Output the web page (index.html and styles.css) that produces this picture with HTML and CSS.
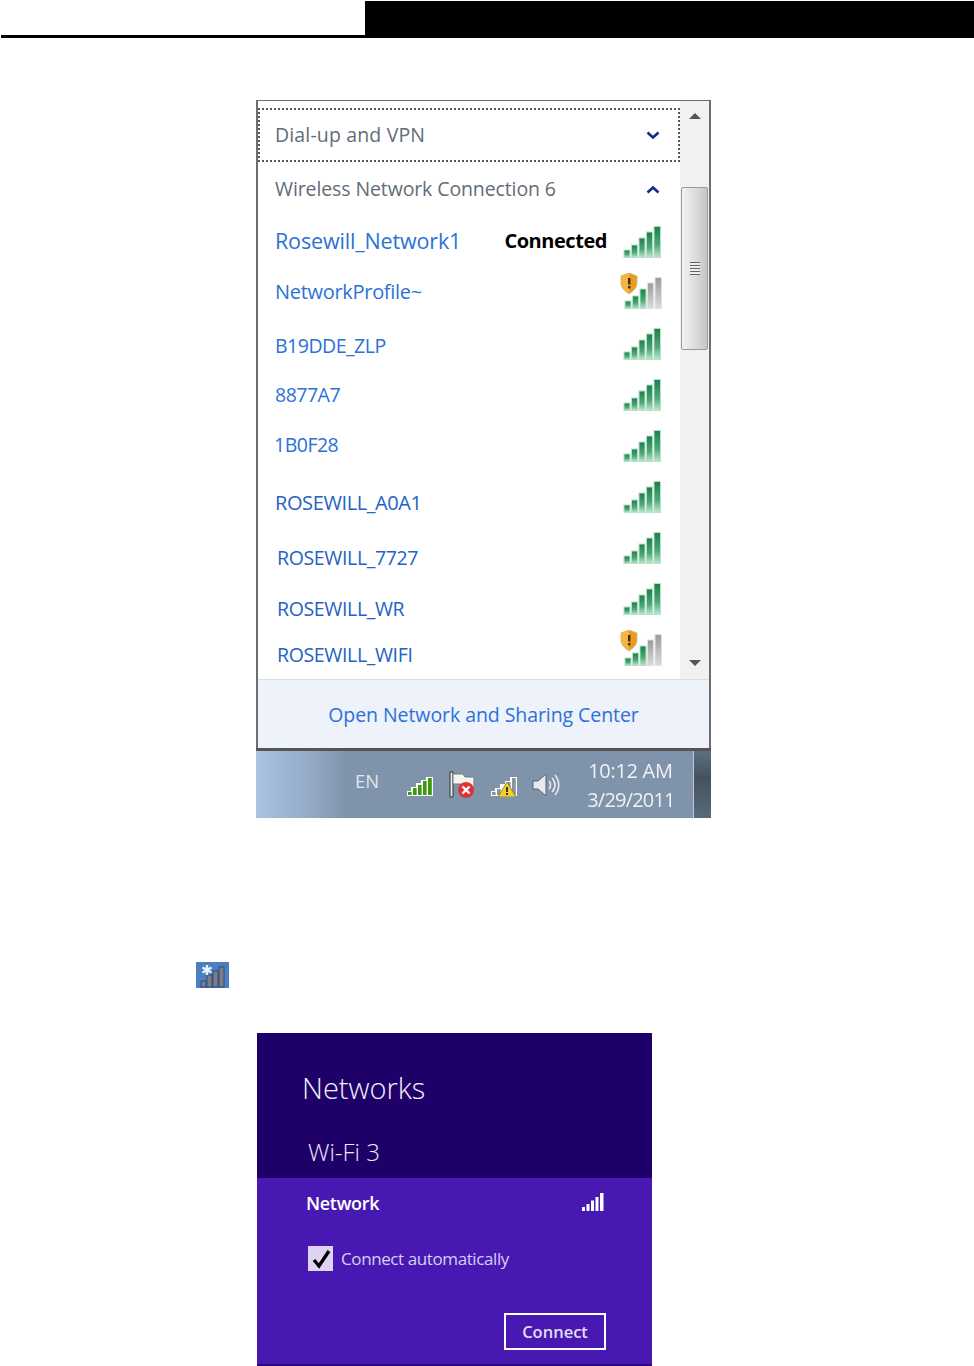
FILE: index.html
```html
<!DOCTYPE html>
<html lang="en">
<head>
    <meta charset="UTF-8">
    <meta name="viewport" content="width=device-width, initial-scale=1.0">
    <title>Connect to a wireless network</title>
    <link rel="stylesheet" href="styles.css">
</head>
<body>

    <svg class="defs" width="0" height="0">
        <defs>
            <linearGradient id="bar-green" x1="0" y1="0" x2="0" y2="1">
                <stop offset="0" stop-color="#1c7f4c"/>
                <stop offset="0.6" stop-color="#4fa978"/>
                <stop offset="1" stop-color="#bfe8cf"/>
            </linearGradient>
            <linearGradient id="bar-grey" x1="0" y1="0" x2="0" y2="1">
                <stop offset="0" stop-color="#9a9a9a"/>
                <stop offset="1" stop-color="#dcdcdc"/>
            </linearGradient>
            <symbol id="bars-full" viewBox="0 0 38 32">
                <g stroke="#b4e0c5" stroke-width="1">
                    <rect x="1" y="24" width="6" height="7.5" fill="url(#bar-green)"/>
                    <rect x="8.5" y="19" width="6" height="12.5" fill="url(#bar-green)"/>
                    <rect x="16" y="12" width="6" height="19.5" fill="url(#bar-green)"/>
                    <rect x="23.5" y="6" width="6" height="25.5" fill="url(#bar-green)"/>
                    <rect x="31" y="0.5" width="6.5" height="31" fill="url(#bar-green)"/>
                </g>
            </symbol>
            <symbol id="bars-secured" viewBox="0 0 42 36">
                <g stroke="#b4e0c5" stroke-width="1">
                    <rect x="5" y="28" width="6" height="7.5" fill="url(#bar-green)"/>
                    <rect x="12.5" y="23" width="6" height="12.5" fill="url(#bar-green)"/>
                    <rect x="20" y="16" width="6" height="19.5" fill="url(#bar-green)"/>
                </g>
                <g stroke="#e2e2e2" stroke-width="1">
                    <rect x="27.5" y="10" width="6" height="25.5" fill="url(#bar-grey)"/>
                    <rect x="35" y="4.5" width="6.5" height="31" fill="url(#bar-grey)"/>
                </g>
                <path d="M9 0 L17 3 V10 C17 15 13 18 9 21 C5 18 1 15 1 10 V3 Z" fill="#ea9a1e" stroke="#c9c088" stroke-width="1"/>
                <path d="M9 0 L9 21 C5 18 1 15 1 10 V3 Z" fill="#f4b544"/>
                <rect x="8" y="5" width="2.4" height="6.5" fill="#4a2a08"/>
                <rect x="8" y="13" width="2.4" height="2.4" fill="#4a2a08"/>
            </symbol>
        </defs>
    </svg>

    <header class="top-bar">
        <div class="top-left"></div>
        <div class="top-right"></div>
    </header>

    <section class="popup">
        <div class="popup-body">
            <div class="net-list">
                <div class="group-row focus">
                    <span class="group-name vpn">Dial-up and VPN</span>
                    <svg class="chevron" viewBox="0 0 14 9"><path d="M1.5 1.5 L7 6.5 L12.5 1.5" /></svg>
                </div>
                <div class="group-row">
                    <span class="group-name">Wireless Network Connection 6</span>
                    <svg class="chevron" viewBox="0 0 14 9"><path d="M1.5 7.5 L7 2.5 L12.5 7.5" /></svg>
                </div>

                <div class="net-row">
                    <span class="net-name big up-1">Rosewill_Network1</span>
                    <span class="net-status up-1">Connected</span>
                    <svg class="bars"><use href="#bars-full"/></svg>
                </div>
                <div class="net-row">
                    <span class="net-name up-1">NetworkProfile~</span>
                    <svg class="bars-secured"><use href="#bars-secured"/></svg>
                </div>
                <div class="net-row">
                    <span class="net-name tight up-1 drop-s">B19DDE_ZLP</span>
                    <svg class="bars"><use href="#bars-full"/></svg>
                </div>
                <div class="net-row">
                    <span class="net-name tight">8877A7</span>
                    <svg class="bars"><use href="#bars-full"/></svg>
                </div>
                <div class="net-row">
                    <span class="net-name tight up-1 out-1">1B0F28</span>
                    <svg class="bars"><use href="#bars-full"/></svg>
                </div>
                <div class="net-row">
                    <span class="net-name small wide drop-m">ROSEWILL_A0A1</span>
                    <svg class="bars"><use href="#bars-full"/></svg>
                </div>
                <div class="net-row">
                    <span class="net-name small in-2 drop-l">ROSEWILL_7727</span>
                    <svg class="bars"><use href="#bars-full"/></svg>
                </div>
                <div class="net-row">
                    <span class="net-name small in-2 drop-l">ROSEWILL_WR</span>
                    <svg class="bars"><use href="#bars-full"/></svg>
                </div>
                <div class="net-row">
                    <span class="net-name small in-2 drop-m2">ROSEWILL_WIFI</span>
                    <svg class="bars-secured"><use href="#bars-secured"/></svg>
                </div>
            </div>

            <div class="scrollbar">
                <svg class="arrow" viewBox="0 0 12 6"><path d="M6 0 L12 6 H0 Z"/></svg>
                <div class="track">
                    <div class="thumb">
                        <span class="grip"></span>
                    </div>
                </div>
                <svg class="arrow" viewBox="0 0 12 6"><path d="M0 0 H12 L6 6 Z"/></svg>
            </div>
        </div>

        <div class="popup-foot">Open Network and Sharing Center</div>

        <div class="taskbar">
            <span class="lang">EN</span>
            <div class="tray">
                <svg class="tray-icon" viewBox="0 0 28 22">
                    <path d="M1 21 V16 H5 V12 H10 V8 H15 V5 H20 V2 H27 V21 Z" fill="#fff"/>
                    <rect x="2" y="17" width="3.6" height="3" fill="#3d9a10"/>
                    <rect x="7" y="13" width="3.6" height="7" fill="#3d9a10"/>
                    <rect x="12" y="10" width="3.6" height="10" fill="#3d9a10"/>
                    <rect x="17" y="6" width="3.6" height="14" fill="#3d9a10"/>
                    <rect x="22" y="3" width="3.8" height="17" fill="#3d9a10"/>
                </svg>
                <svg class="tray-icon flag" viewBox="0 0 28 27">
                    <path d="M2 1 H5 V26 H2 Z" fill="#e8e8e8" stroke="#333" stroke-width="1"/>
                    <path d="M5 3 H15 L17 6 H26 V16 H15 L13 13 H5 Z" fill="#f4f4f4" stroke="#777" stroke-width="1"/>
                    <circle cx="18" cy="19" r="8" fill="#d9343a"/>
                    <path d="M14.5 15.5 L21.5 22.5 M21.5 15.5 L14.5 22.5" stroke="#fff" stroke-width="2.4"/>
                </svg>
                <svg class="tray-icon" viewBox="0 0 28 22">
                    <path d="M1 21 V16 H5 V13 H10 V9 H15 V6 H20 V2 H27 V21 Z" fill="#fff"/>
                    <rect x="2" y="17" width="3.6" height="3" fill="#8a94a0"/>
                    <rect x="7" y="14" width="3.6" height="6" fill="#8a94a0"/>
                    <rect x="17" y="7" width="3.6" height="13" fill="#8a94a0"/>
                    <rect x="22" y="3" width="3.8" height="17" fill="#8a94a0"/>
                    <path d="M17 7 L26 22 H8 Z" fill="#f5cf2e" stroke="#8a7410" stroke-width="0.8"/>
                    <rect x="16" y="12" width="2" height="5" fill="#333"/>
                    <rect x="16" y="18" width="2" height="2" fill="#333"/>
                </svg>
                <svg class="tray-icon speaker" viewBox="0 0 28 26">
                    <path d="M1 9 H6 L14 2 V24 L6 17 H1 Z" fill="#e6e9ee" stroke="#5a6470" stroke-width="1"/>
                    <path d="M17 9 C19 11 19 15 17 17 M20 6 C24 10 24 16 20 20 M23 3 C28 9 28 17 23 23" fill="none" stroke="#e6e9ee" stroke-width="1.6"/>
                </svg>
            </div>
            <div class="clock">
                <span>10:12 AM</span>
                <span class="date">3/29/2011</span>
            </div>
            <div class="show-desktop"></div>
        </div>
    </section>

    <div class="legend-icon">
        <svg viewBox="0 0 33 26" width="33" height="26">
            <rect x="5" y="19" width="5" height="6" fill="#7c7e84" stroke="#2c4c7c"/>
            <rect x="11" y="13" width="5" height="12" fill="#7c7e84" stroke="#2c4c7c"/>
            <rect x="17" y="9" width="5" height="16" fill="#7c7e84" stroke="#2c4c7c"/>
            <rect x="23" y="5" width="5" height="20" fill="#7c7e84" stroke="#2c4c7c"/>
            <path d="M11 3 V13 M6.5 5.5 L15.5 10.5 M15.5 5.5 L6.5 10.5" stroke="#eef2f8" stroke-width="2.4"/>
        </svg>
    </div>

    <section class="charm">
        <div class="charm-head">
            <div class="charm-title">Networks</div>
            <div class="charm-sub">Wi-Fi 3</div>
        </div>
        <div class="charm-body">
            <div class="charm-net">
                <span>Network</span>
                <svg class="charm-bars" viewBox="0 0 22 18">
                    <rect x="0" y="14" width="3" height="4"/>
                    <rect x="4.5" y="11" width="3" height="7"/>
                    <rect x="9" y="7.5" width="3" height="10.5"/>
                    <rect x="13.5" y="4" width="3" height="14"/>
                    <rect x="18" y="0" width="3.5" height="18"/>
                </svg>
            </div>
            <div class="charm-check">
                <span class="checkbox">
                    <svg viewBox="0 0 24 24" width="24" height="24"><path d="M5 13 L10 19 L20 4" /></svg>
                </span>
                <span>Connect automatically</span>
            </div>
            <div class="charm-actions">
                <button class="connect-btn">Connect</button>
            </div>
        </div>
    </section>

</body>
</html>
```

FILE: styles.css
```css
html, body { margin: 0; padding: 0; height: 1366px; overflow: hidden; background: #fff; }
body { font-family: "Open Sans", Arial, sans-serif; }
.defs { display: block; height: 0; }

.top-bar { display: flex; height: 38px; box-sizing: border-box; padding-top: 1px; }
.top-left { width: 364px; height: 34px; margin-left: 1px; border-bottom: 3px solid #000; }
.top-right { flex: 1; background: #000; }

.popup { width: 455px; height: 718px; margin: 62px 0 0 256px; box-sizing: border-box; border: solid #6e6e6e; border-width: 1px 2px 0 2px; display: flex; flex-direction: column; filter: blur(0.35px); }
.popup-body { display: flex; height: 578px; background: #fff; }
.net-list { width: 422px; padding-top: 7px; box-sizing: border-box; }

.group-row { height: 54px; display: flex; align-items: center; justify-content: space-between; padding: 0 20px 0 17px; box-sizing: border-box; }
.group-row.focus { height: 54px; border: 2px dotted #555; padding-left: 15px; padding-right: 18px; }
.group-name { font-size: 19.5px; color: #636c78; letter-spacing: -0.11px; margin-bottom: 2px; }
.group-name.vpn { letter-spacing: 0.15px; }
.chevron { width: 14px; height: 9px; fill: none; stroke: #0a2c8f; stroke-width: 2.6; }

.net-row { height: 51px; display: flex; align-items: center; padding: 0 19px 0 17px; box-sizing: border-box; }
.net-name { font-size: 20px; color: #2b71d8; letter-spacing: -0.3px; flex: 1; }
.net-name.big { font-size: 21.5px; letter-spacing: -0.15px; }
.net-name.tight { font-size: 19.5px; letter-spacing: -0.5px; }
.net-name.small { font-size: 19.5px; color: #2462c4; letter-spacing: -0.35px; }
.net-name.wide { font-size: 20px; letter-spacing: -0.4px; }
.net-status { font-size: 20px; font-weight: 700; color: #000; margin-right: 16px; letter-spacing: -0.45px; }
.bars { width: 38px; height: 32px; }
.bars-secured { width: 42px; height: 36px; margin: -4px -1px 0 -3px; }

.up-1 { margin-bottom: 2px; }
.drop-s { margin-top: 5px; }
.drop-m { margin-top: 11px; }
.drop-l { margin-top: 19px; }
.drop-m2 { margin-top: 9px; }
.out-1 { margin-left: -1px; }
.in-2 { margin-left: 2px; }

.scrollbar { flex: 1; background: #f1f1f1; display: flex; flex-direction: column; align-items: center; padding: 12px 0 13px; box-sizing: border-box; }
.arrow { width: 12px; height: 6px; fill: #555; flex: none; }
.track { flex: 1; width: 100%; padding-top: 68px; box-sizing: border-box; }
.thumb { height: 163px; margin: 0 1px; box-sizing: border-box; border: 1px solid #9a9a9a; border-radius: 2px; background: linear-gradient(to right, #f2f2f2, #dcdcdc 55%, #c4c4c4); display: flex; align-items: center; justify-content: center; }
.grip { width: 10px; height: 13px; background: repeating-linear-gradient(to bottom, #666 0 1px, #ececec 1px 3px); }

.popup-foot { height: 69px; background: #eef2fb; border-top: 1px solid #d5dceb; box-sizing: border-box; display: flex; align-items: center; justify-content: center; padding-top: 1px; font-size: 19.5px; color: #2b71d8; letter-spacing: -0.07px; }

.taskbar { flex: 1; margin: 0 -2px; border-top: 3px solid #555; background: linear-gradient(to right, #a8c4e2 0, #93aac6 12%, #7f93aa 20%, #7f93aa 100%); display: flex; align-items: center; padding-left: 99px; }
.lang { font-size: 18.5px; color: #dfe6ee; margin-right: 27px; margin-top: -8px; }
.tray { display: flex; align-items: center; gap: 14px; }
.tray-icon { width: 28px; height: 22px; margin-top: 3px; }
.tray-icon.flag { height: 27px; margin-top: 0; }
.tray-icon.speaker { height: 26px; margin-top: 0; }
.clock { display: flex; flex-direction: column; gap: 4px; margin-left: 28px; font-size: 20px; line-height: 25px; color: #eef2f6; letter-spacing: -0.3px; }
.date { letter-spacing: -0.8px; margin-left: -1px; }
.show-desktop { width: 17px; align-self: stretch; margin-left: auto; border-left: 1px solid #c0cad6; background: linear-gradient(to bottom, #5e6e80, #44525f 40%, #5a6a7c); }

.legend-icon { width: 33px; height: 26px; margin: 144px 0 0 196px; background: #4a7fc4; }
.legend-icon svg { display: block; }

.charm { width: 395px; height: 333px; margin: 45px 0 0 257px; display: flex; flex-direction: column; color: #fff; }
.charm-head { height: 145px; background: #1f0068; box-sizing: border-box; padding: 35px 0 0 45px; }
.charm-title { font-size: 29px; line-height: 40px; color: #f2f0fa; font-weight: 300; }
.charm-sub { font-size: 24px; line-height: 32px; margin: 28px 0 0 6px; color: #eeeaf8; font-weight: 300; }
.charm-body { flex: 1; background: #4719b2; border-bottom: 2px solid #2a0a80; padding: 0 48px 0 49px; }
.charm-net { display: flex; align-items: center; justify-content: space-between; height: 52px; box-sizing: border-box; padding-bottom: 2px; font-size: 18px; font-weight: 600; letter-spacing: -0.3px; }
.charm-bars { width: 22px; height: 18px; fill: #fff; margin-top: -3px; }
.charm-check { display: flex; align-items: center; gap: 8px; margin: 16px 0 0 2px; font-size: 17px; color: #d8cff0; letter-spacing: -0.4px; }
.checkbox { width: 25px; height: 25px; background: #ded4f2; display: flex; align-items: center; justify-content: center; }
.checkbox svg { fill: none; stroke: #000; stroke-width: 3.4; }
.charm-actions { display: flex; justify-content: flex-end; margin: 42px -2px 0 0; }
.connect-btn { width: 102px; height: 37px; background: transparent; border: 2px solid #fff; color: #e4dcf6; font-family: inherit; font-size: 16.5px; font-weight: 600; padding: 0; }
```
